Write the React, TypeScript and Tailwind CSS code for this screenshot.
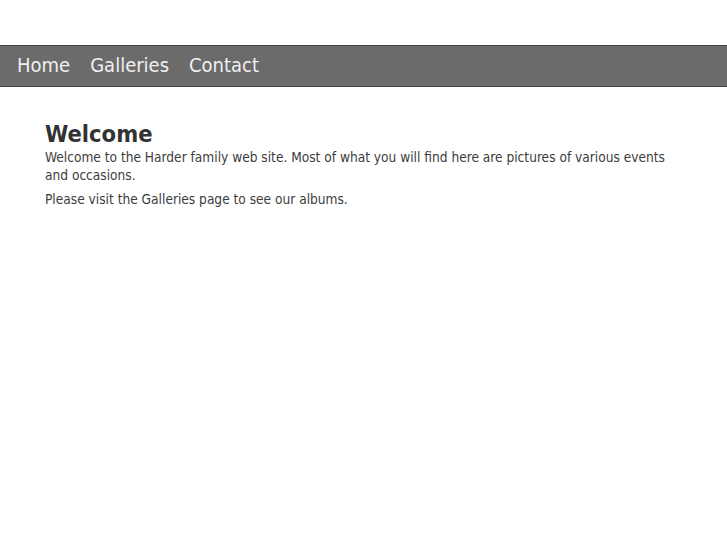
import React from "react";

const links = ["Home", "Galleries", "Contact"];

export default function App() {
  return (
    <div className="min-h-[545px] bg-white font-['DejaVu_Sans_Condensed','DejaVu_Sans',sans-serif]">
      <div className="h-[45px]" />
      <nav className="flex h-[42px] items-center gap-[20px] border-y border-[#444] bg-[#6b6b6b] pl-[17px] pb-[3px]">
        {links.map((l) => (
          <a key={l} href="#" className="text-[20px] text-[#f0f0f0]">
            {l}
          </a>
        ))}
      </nav>
      <main className="ml-[45px] w-[640px] pt-[33px] text-[#333]">
        <h1 className="text-[23.5px] font-bold leading-[28px]">Welcome</h1>
        <p className="text-[13.6px] leading-[18px] text-[#3c3c3c]">
          Welcome to the Harder family web site. Most of what you will find here are pictures of various events and occasions.
        </p>
        <p className="mt-[6px] text-[13.6px] leading-[18px] text-[#3c3c3c]">
          Please visit the Galleries page to see our albums.
        </p>
      </main>
    </div>
  );
}
